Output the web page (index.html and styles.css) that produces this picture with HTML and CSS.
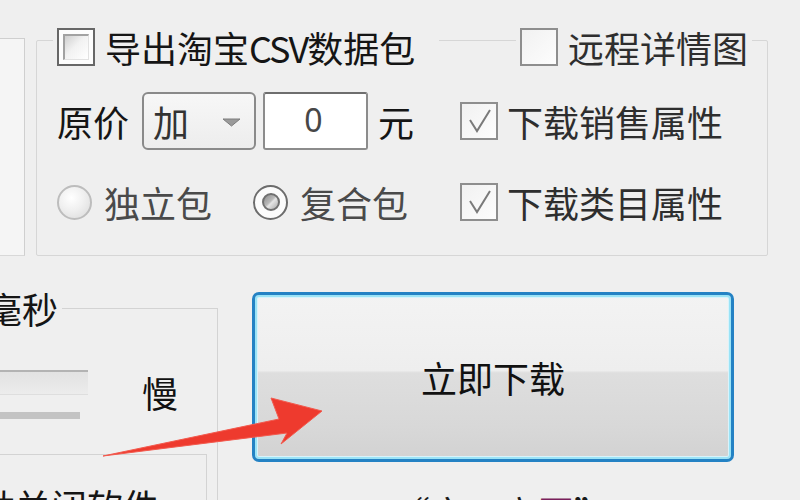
FILE: index.html
```html
<!DOCTYPE html>
<html lang="zh-CN">
<head>
<meta charset="utf-8">
<title>下载设置</title>
<link rel="stylesheet" href="styles.css">
</head>
<body>
<div class="top">
  <div class="leftpanel"></div>
  <div class="group">
    <div class="row1">
      <label class="caption">
        <span class="cb cb-dark"><span class="cb-inner"></span></span>
        <span class="lbl strong">导出淘宝<span class="latin">CSV</span>数据包</span>
      </label>
      <label class="caption">
        <span class="cb cb-light"></span>
        <span class="lbl mid">远程详情图</span>
      </label>
    </div>
    <div class="grid">
      <div class="price">
        <span class="lbl strong">原价</span>
        <div class="select">
          <span class="sel-text">加</span>
          <svg class="tri" width="19" height="9" viewBox="0 0 19 9"><polygon points="1,1 18,1 9.5,8" fill="#9a9a9a" stroke="#7d7d7d" stroke-width="1"/></svg>
        </div>
        <div class="input">0</div>
        <span class="lbl strong yuan">元</span>
      </div>
      <label class="check">
        <span class="cb cb-light"><svg width="34" height="34" viewBox="0 0 34 34"><polyline points="8,16 15,27 28,6" fill="none" stroke="#7a7a7a" stroke-width="2"/></svg></span>
        <span class="lbl mid">下载销售属性</span>
      </label>
      <div class="radios">
        <span class="radio"></span>
        <span class="lbl soft rl">独立包</span>
        <span class="radio on"><span class="dot"></span></span>
        <span class="lbl soft rl">复合包</span>
      </div>
      <label class="check">
        <span class="cb cb-light"><svg width="34" height="34" viewBox="0 0 34 34"><polyline points="8,16 15,27 28,6" fill="none" stroke="#7a7a7a" stroke-width="2"/></svg></span>
        <span class="lbl mid">下载类目属性</span>
      </label>
    </div>
  </div>
</div>
<div class="bottom">
  <div class="speed">
    <div class="speed-cap"><span class="lbl strong">毫秒</span></div>
    <div class="slider-row">
      <div class="slider">
        <div class="track"></div>
        <div class="ticks"></div>
      </div>
      <span class="lbl strong slow">慢</span>
    </div>
    <div class="closebox"><span class="lbl strong">自动关闭软件</span></div>
  </div>
  <div class="action">
    <button class="download">立即下载</button>
    <div class="hint">“文一立<span class="purple">图</span>”</div>
  </div>
</div>
<svg class="arrow" width="800" height="500" viewBox="0 0 800 500">
  <polygon points="103,456 279,419 271,398 322,411 281,444 287,433" fill="#ee3a2e" stroke="#f25a4e" stroke-width="1" stroke-linejoin="round"/>
</svg>
</body>
</html>
```
FILE: styles.css
```css
html, body {
  margin: 0;
  padding: 0;
}
body {
  width: 800px;
  height: 500px;
  overflow: hidden;
  position: relative;
  background: #efefef;
  font-family: "Noto Sans CJK SC", "Noto Sans", sans-serif;
  font-size: 36px;
  color: #1a1a1a;
}
.lbl {
  line-height: 40px;
  white-space: nowrap;
}
.strong { color: #151515; }
.mid { color: #2e2e2e; }
.soft { color: #4a4a4a; }
.latin { letter-spacing: -2px; }

.top {
  height: 260px;
  display: flex;
  align-items: flex-start;
}
.leftpanel {
  width: 25px;
  height: 218px;
  margin-top: 38px;
  box-sizing: border-box;
  border-top: 1px solid #cfcfcf;
  border-right: 1px solid #cfcfcf;
  border-bottom: 1px solid #d8d8d8;
  background: #f5f5f5;
}
.group {
  margin-left: 11px;
  margin-top: 40px;
  width: 732px;
  height: 216px;
  box-sizing: border-box;
  border: 1px solid #d6d6d6;
  border-radius: 2px;
  padding: 0 15px 0 20px;
}
.row1 {
  display: flex;
  justify-content: space-between;
  margin-top: -14px;
  margin-left: -4px;
  height: 40px;
}
.caption {
  display: flex;
  align-items: center;
  background: #efefef;
  padding: 0 4px;
  height: 40px;
}
.caption:first-child { padding-right: 24px; }
.cb {
  width: 38px;
  height: 38px;
  box-sizing: border-box;
  margin-right: 9px;
  display: flex;
  align-items: center;
  justify-content: center;
  flex-shrink: 0;
}
.caption .cb { margin-right: 10px; }
.cb-dark {
  border: 2px solid #676767;
  background: #fdfdfd;
  padding: 4px;
}
.cb-inner {
  width: 100%;
  height: 100%;
  box-sizing: border-box;
  border-top: 2px solid #a2a2a2;
  border-left: 2px solid #a2a2a2;
  border-right: 1px solid #e2e2e2;
  border-bottom: 1px solid #e2e2e2;
  background: linear-gradient(135deg, #cfcfcf 0%, #f2f2f2 45%, #ffffff 100%);
}
.cb-light {
  border: 2px solid #8e8e8e;
  background: linear-gradient(135deg, #f1f1f1, #fdfdfd);
}

.grid {
  display: grid;
  grid-template-columns: 403px 1fr;
  grid-template-rows: 58px 40px;
  row-gap: 32px;
  margin-top: 25px;
}
.price, .radios, .check {
  display: flex;
  align-items: center;
}
.check { align-self: center; }
.select {
  margin-left: 13px;
  width: 114px;
  height: 58px;
  box-sizing: border-box;
  border: 2px solid #8a8a8a;
  border-radius: 6px;
  background: linear-gradient(#f7f7f7, #ededed);
  display: flex;
  align-items: center;
  padding-left: 9px;
}
.sel-text {
  color: #333;
  line-height: 40px;
}
.tri {
  margin-left: 33px;
  margin-top: 2px;
}
.input {
  margin-left: 7px;
  width: 105px;
  height: 58px;
  box-sizing: border-box;
  border: 2px solid #8c8c8c;
  border-top-color: #6e6e6e;
  border-radius: 3px;
  background: #ffffff;
  color: #474747;
  font-family: "Noto Sans", sans-serif;
  font-size: 32px;
  line-height: 52px;
  text-align: center;
  padding-right: 4px;
}
.yuan { margin-left: 10px; }

.radio {
  width: 35px;
  height: 35px;
  box-sizing: border-box;
  border-radius: 50%;
  border: 2px solid #bdbdbd;
  background: radial-gradient(circle at 40% 35%, #ffffff 0%, #f0f0f0 45%, #d9d9d9 100%);
  display: flex;
  align-items: center;
  justify-content: center;
  flex-shrink: 0;
}
.radio.on {
  margin-left: 41px;
  border: 2px solid #6c6c6c;
  background: #fbfbfb;
}
.dot {
  width: 18px;
  height: 18px;
  box-sizing: border-box;
  border-radius: 50%;
  border: 2px solid #707070;
  background: linear-gradient(135deg, #8d8d8d 0%, #b9b9b9 45%, #e6e6e6 55%, #a9a9a9 100%);
}
.rl { margin-left: 12px; }

.bottom {
  display: flex;
  align-items: flex-start;
}
.speed {
  margin-left: -20px;
  margin-top: 48px;
  width: 238px;
  height: 300px;
  box-sizing: border-box;
  border: 1px solid #d3d3d3;
  border-bottom: none;
  flex-shrink: 0;
}
.speed-cap {
  display: flex;
  margin-top: -20px;
  height: 38px;
}
.speed-cap .lbl {
  margin-left: 5px;
  padding-right: 4px;
  background: #efefef;
  line-height: 38px;
}
.slider-row {
  display: flex;
  align-items: flex-start;
  margin-top: 43px;
  height: 49px;
}
.slider {
  width: 107px;
  flex-shrink: 0;
}
.track {
  height: 25px;
  box-sizing: border-box;
  border-top: 2px solid #b3b3b3;
  border-bottom: 1px solid #dedede;
  background: linear-gradient(#e2e2e2, #ececec);
}
.ticks {
  margin-top: 17px;
  width: 99px;
  height: 7px;
  background: #c3c3c3;
}
.slow {
  margin-left: 54px;
  margin-top: 4px;
  line-height: 36px;
  color: #111;
}
.closebox {
  margin-top: 35px;
  margin-left: -10px;
  width: 236px;
  height: 200px;
  box-sizing: border-box;
  border: 1px solid #d3d3d3;
  border-bottom: none;
  padding-top: 32px;
}
.closebox .lbl {
  display: block;
  margin-left: -29px;
  line-height: 36px;
}

.action {
  margin-left: 34px;
  margin-top: 32px;
  display: flex;
  flex-direction: column;
}
.download {
  width: 482px;
  height: 170px;
  box-sizing: border-box;
  border: 3px solid #2482c4;
  border-radius: 7px;
  box-shadow: inset 0 0 0 2px #9be3f6, inset 0 0 0 3px #d8f3fb;
  background: linear-gradient(to bottom, #f3f3f3 0%, #eeeeee 46%, #dedede 47.5%, #d8d8d8 80%, #d2d2d2 100%);
  font-family: "Noto Sans CJK SC", sans-serif;
  font-size: 36px;
  color: #111;
  padding: 0;
  margin: 0;
}
.hint {
  margin-top: 32px;
  padding-left: 142px;
  line-height: 36px;
  color: #1a1a1a;
  white-space: nowrap;
}
.purple { color: #7a1f5c; }

.arrow {
  position: absolute;
  left: 0;
  top: 0;
  pointer-events: none;
}
```
